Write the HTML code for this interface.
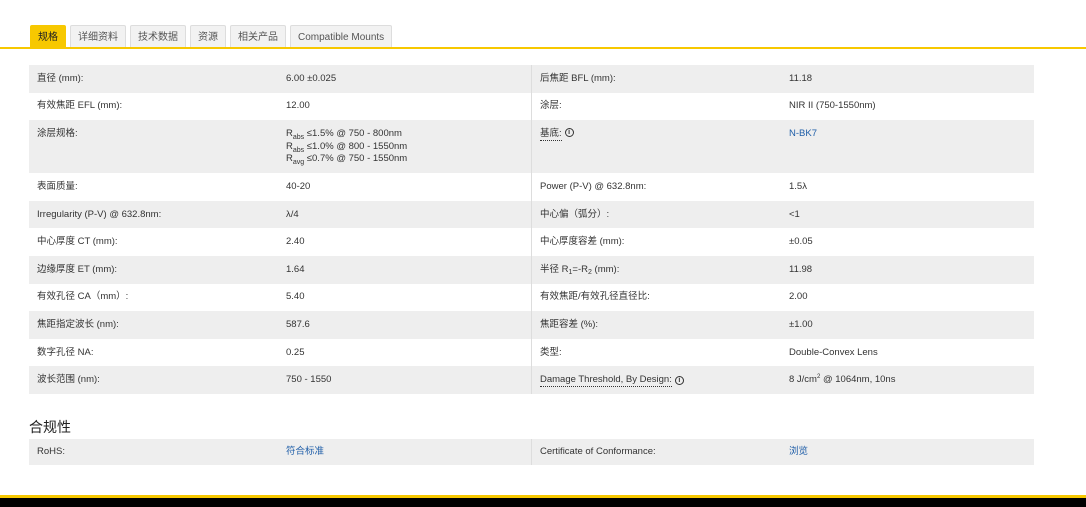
<!DOCTYPE html>
<html><head><meta charset="utf-8"><style>
*{margin:0;padding:0;box-sizing:border-box}
body{width:1086px;height:507px;background:#fff;font-family:"Liberation Sans","Noto Sans CJK SC",sans-serif;color:#333;font-size:9.5px;position:relative;overflow:hidden}
.tabs{position:absolute;top:25px;left:30px;display:flex;gap:4px}
.tab{height:23px;padding:0 7px;line-height:23px;border:1px solid #ddd;border-bottom:none;background:#f2f2f2;color:#555;font-size:10px;border-radius:2px 2px 0 0}
.tab.on{background:#f7c800;border-color:#f7c800;color:#222}
.yl{position:absolute;top:47px;left:0;width:1086px;height:2px;background:#f7c800}
.tbl{position:absolute;left:29px;width:1005px}
.r{display:flex;height:27.6px;line-height:12px;align-items:center}
.r>div{padding:0 8px;height:100%;display:flex;align-items:center}
.r:nth-child(odd){background:#eee}
.c1{width:249px}.c2{width:254px;border-right:1px solid #ddd}.c3{width:249px}
.lk{color:#1f5ea8}
.r.tall{height:53px;align-items:stretch}
.r.tall>div{align-items:flex-start;padding-top:8px}
.s{font-size:7px;position:relative;top:3px;line-height:0}
.u{border-bottom:1px dotted #333}
.i{display:inline-block;width:9px;height:9px;border:1.3px solid #333;border-radius:50%;font-size:7px;line-height:7px;text-align:center;font-weight:bold;margin-left:3px}
h3{position:absolute;left:29px;top:417px;font-size:14px;font-weight:normal;color:#222}
.bot{position:absolute;left:0;top:495px;width:1086px;height:3px;background:#f7c800}
.blk{position:absolute;left:0;top:498px;width:1086px;height:9px;background:#000}
</style></head><body>
<div class="tabs"><div class="tab on">规格</div><div class="tab">详细资料</div><div class="tab">技术数据</div><div class="tab">资源</div><div class="tab">相关产品</div><div class="tab">Compatible Mounts</div></div>
<div class="yl"></div>
<div class="tbl" style="top:65px">
<div class="r"><div class="c1">直径 (mm):</div><div class="c2">6.00 ±0.025</div><div class="c3">后焦距 BFL (mm):</div><div>11.18</div></div>
<div class="r"><div class="c1">有效焦距 EFL (mm):</div><div class="c2">12.00</div><div class="c3">涂层:</div><div>NIR II (750-1550nm)</div></div>
<div class="r tall"><div class="c1">涂层规格:</div><div class="c2" style="line-height:12.5px;display:block">R<span class="s">abs</span> ≤1.5% @ 750 - 800nm<br>R<span class="s">abs</span> ≤1.0% @ 800 - 1550nm<br>R<span class="s">avg</span> ≤0.7% @ 750 - 1550nm</div><div class="c3"><span class="u">基底:</span><span class="i">i</span></div><div class="lk">N-BK7</div></div>
<div class="r"><div class="c1">表面质量:</div><div class="c2">40-20</div><div class="c3">Power (P-V) @ 632.8nm:</div><div>1.5λ</div></div>
<div class="r"><div class="c1">Irregularity (P-V) @ 632.8nm:</div><div class="c2">λ/4</div><div class="c3">中心偏（弧分）:</div><div>&lt;1</div></div>
<div class="r"><div class="c1">中心厚度 CT (mm):</div><div class="c2">2.40</div><div class="c3">中心厚度容差 (mm):</div><div>±0.05</div></div>
<div class="r"><div class="c1">边缘厚度 ET (mm):</div><div class="c2">1.64</div><div class="c3">半径&nbsp;R<span class="s">1</span>=-R<span class="s">2</span>&nbsp;(mm):</div><div>11.98</div></div>
<div class="r"><div class="c1">有效孔径 CA（mm）:</div><div class="c2">5.40</div><div class="c3">有效焦距/有效孔径直径比:</div><div>2.00</div></div>
<div class="r"><div class="c1">焦距指定波长 (nm):</div><div class="c2">587.6</div><div class="c3">焦距容差 (%):</div><div>±1.00</div></div>
<div class="r"><div class="c1">数字孔径 NA:</div><div class="c2">0.25</div><div class="c3">类型:</div><div>Double-Convex Lens</div></div>
<div class="r"><div class="c1">波长范围 (nm):</div><div class="c2">750 - 1550</div><div class="c3"><span class="u">Damage Threshold, By Design:</span><span class="i">i</span></div><div>8 J/cm<span style="font-size:6px;position:relative;top:-3px;line-height:0">2</span>&nbsp;@ 1064nm, 10ns</div></div>
</div>
<h3>合规性</h3>
<div class="tbl" style="top:439px">
<div class="r" style="height:26px"><div class="c1">RoHS:</div><div class="c2 lk">符合标准</div><div class="c3">Certificate of Conformance:</div><div class="lk">浏览</div></div>
</div>
<div class="bot"></div><div class="blk"></div>
</body></html>
